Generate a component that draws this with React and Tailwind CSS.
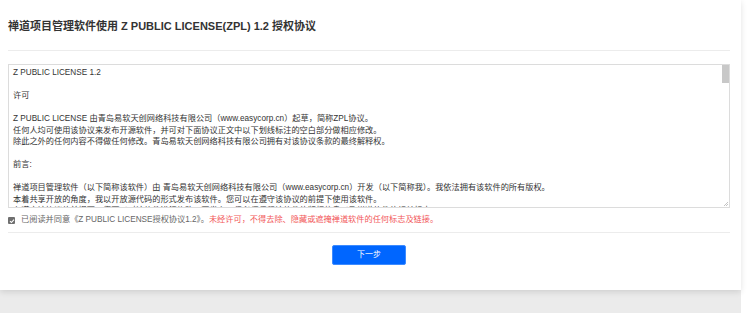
import React from "react";

const lines = [
  "Z PUBLIC LICENSE 1.2",
  "",
  "许可",
  "",
  "Z PUBLIC LICENSE 由青岛易软天创网络科技有限公司（www.easycorp.cn）起草，简称ZPL协议。",
  "任何人均可使用该协议来发布开源软件，并可对下面协议正文中以下划线标注的空白部分做相应修改。",
  "除此之外的任何内容不得做任何修改。青岛易软天创网络科技有限公司拥有对该协议条款的最终解释权。",
  "",
  "前言:",
  "",
  "禅道项目管理软件（以下简称该软件）由 青岛易软天创网络科技有限公司（www.easycorp.cn）开发（以下简称我）。我依法拥有该软件的所有版权。",
  "本着共享开放的角度，我以开放源代码的形式发布该软件。您可以在遵守该协议的前提下使用该软件。",
  "在遵守该协议的前提下，您可以对该软件进行修改、再发布，但必须保留该软件的版权信息以及禅道软件的相关标志。",
  "",
];

export default function App() {
  return (
    <div
      className="w-[741px] h-[313px] bg-[#ebebeb]"
      style={{ fontFamily: '"Liberation Sans", "Noto Sans CJK SC", sans-serif' }}
    >
      <div className="bg-white h-[290px] pl-[8px] pr-[11px] shadow-[0_2px_6px_rgba(0,0,0,0.12)]">
        {/* Header */}
        <div className="h-[51px] flex items-center border-b border-[#ececec]">
          <h1 className="text-[11px] font-bold text-[#333] pt-[2px]">
            禅道项目管理软件使用 Z PUBLIC LICENSE(ZPL) 1.2 授权协议
          </h1>
        </div>

        {/* License text */}
        <div className="relative mt-[13px] h-[144px] border border-[#dcdcdc] overflow-hidden">
          <div className="pl-[4px] pt-[2px] pr-[10px] text-[8.2px] leading-[11.5px] text-[#333]">
            {lines.map((l, i) => (
              <div key={i} className="h-[11.5px] whitespace-nowrap">{l}</div>
            ))}
          </div>
          <div className="absolute right-0 top-0 w-[7px] h-[18px] bg-[#c8c8c8]" />
          <svg className="absolute right-[1px] bottom-[1px]" width="5" height="5" viewBox="0 0 5 5">
            <path d="M5 1 L1 5 M5 3 L3 5" stroke="#b5b5b5" strokeWidth="0.8" />
          </svg>
        </div>

        {/* Agreement */}
        <div className="h-[25px] flex items-center gap-[6px] text-[8.2px] border-b border-[#ececec] pt-[1px]">
          <span className="w-[7px] h-[7px] rounded-[1px] bg-[#6f6f6f] flex items-center justify-center">
            <svg width="6" height="6" viewBox="0 0 6 6">
              <path d="M1 3.2 L2.4 4.5 L5 1.6" stroke="#fff" strokeWidth="1.1" fill="none" />
            </svg>
          </span>
          <span className="text-[#666]">
            已阅读并同意《Z PUBLIC LICENSE授权协议1.2》。
            <span className="text-[#f2585a]">未经许可，不得去除、隐藏或遮掩禅道软件的任何标志及链接。</span>
          </span>
        </div>

        {/* Footer */}
        <div className="flex justify-center pt-[12px]">
          <button className="w-[74px] h-[20px] rounded-[2px] bg-[#0066ff] border border-[#3d8bff] text-white text-[8px]">
            下一步
          </button>
        </div>
      </div>
    </div>
  );
}
